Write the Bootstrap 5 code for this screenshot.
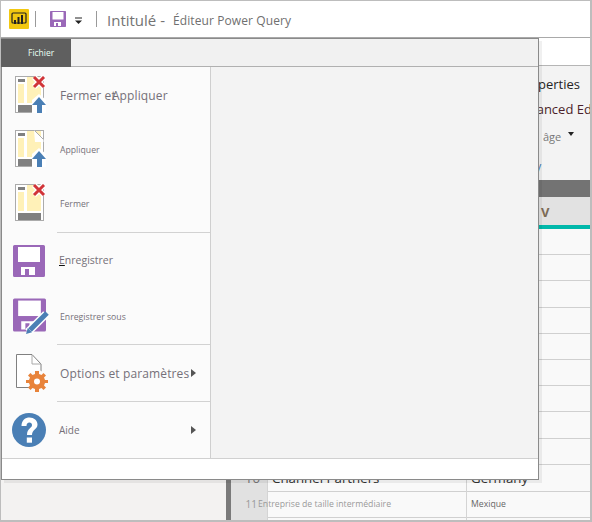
<!DOCTYPE html>
<html lang="fr">
<head>
    <title>Éditeur Power Query</title>
    <meta charset="UTF-8">
    <meta name="viewport" content="width=device-width, initial-scale=1.0">
    <link href="https://cdn.jsdelivr.net/npm/bootstrap@5.3.0/dist/css/bootstrap.min.css" rel="stylesheet">
    <style>
        html, body { height: 522px; overflow: hidden; }
        body { font-family: "Open Sans", "Liberation Sans", sans-serif; background: #fff; color: #6e6a72; position: relative; }

        /* fenetre derriere le menu */
        .app-frame { height: 522px; border: 1px solid #bdbdbd; border-bottom-width: 2px; border-right-width: 2px; }
        .title-bar { height: 37px; padding-left: 8px; border-bottom: 1px solid #a9a9a9; }
        .title-sep { width: 1px; height: 16px; background: #9a9a9a; }
        .sep-first { margin-left: 6px; margin-right: 14px; }
        .save-caret { margin-left: 8px; margin-right: 12px; margin-top: 3px; }
        .title-main { font-size: 15px; color: #737373; margin-left: 10px; width: 66px; white-space: nowrap; padding-top: 3px; }
        .title-sub { font-size: 12px; color: #6f6f6f; white-space: nowrap; letter-spacing: .1px; padding-top: 3px; }
        .tab-strip { height: 28px; border-bottom: 1px solid #b5b5b5; }
        .side-nav { width: 225px; background: #f3f2f1; }
        .ribbon { height: 114px; background: #f3f3f3; white-space: nowrap; padding-top: 6px; overflow: hidden; }
        .ribbon-line { height: 25px; line-height: 25px; font-size: 13px; color: #252423; padding-left: 288px; }
        .ribbon-line.first-line { padding-left: 291px; }
        .ribbon-line.dark { color: #4b1f2a; }
        .ribbon-small { height: 32px; line-height: 30px; padding-left: 317px; font-size: 11px; color: #777; }
        .caret-down { display: inline-block; margin-left: 7px; border: 3.5px solid transparent; border-top: 4px solid #222; border-bottom: 0; vertical-align: 5px; }
        .ribbon-link { height: 25px; line-height: 25px; padding-left: 281px; font-size: 12px; color: #4a7fb5; }
        .table-area { flex: 1; min-width: 0; background: #f9f9f9; }
        .head-dark { height: 17px; background: #737373; }
        .head-cols { height: 28px; background: #e2e2e2; }
        .v-mark { margin-left: 242px; padding-left: 73px; line-height: 30px; font-size: 13px; font-weight: 700; color: #7b6a55; }
        .teal-bar { height: 4px; background: #01b8aa; margin-left: 42px; }
        .data-row { height: 26.2px; display: grid; grid-template-columns: 5px 37px 199px 1fr; }
        .cell-bar { background: #7a7a7a; }
        .cell-num { background: #e1e1e1; border-right: 1px solid #d4d4d4; border-bottom: 1px solid #d0d0d0; text-align: right; padding-right: 7px; white-space: nowrap; }
        .cell-txt { border-right: 1px solid #d4d4d4; border-bottom: 1px solid #d0d0d0; padding-left: 4px; white-space: nowrap; }
        .cell-last { border-bottom: 1px solid #d0d0d0; padding-left: 4px; white-space: nowrap; }
        .row-big > div { font-size: 13.3px; line-height: 26px; color: #333; }
        .row-big .cell-num { color: #777; }
        .row-small > div { font-size: 8.7px; line-height: 26px; color: #999; }
        .row-small .cell-num { font-size: 10px; padding-right: 10px; }
        .row-small .cell-last { color: #666; }
        .over-num { margin-left: -14px; }

        /* menu Fichier */
        .file-menu { position: absolute; left: 1px; top: 38px; width: 538px; height: 442px; background: #fff; border: 1px solid #8a8a8a; box-shadow: 3px 3px 0 rgba(0,0,0,.06); }
        .menu-tabs { height: 28px; background: #f1f1f1; border-bottom: 1px solid #b0b0b0; }
        .tab-file { width: 70px; height: 28px; margin-left: -1px; background: #5f5f5f; color: #eafff4; font-size: 8.5px; line-height: 28px; padding-left: 27px; }
        .menu-body { height: 391px; }
        .menu-left { width: 209px; background: #fbfbfb; border-right: 1px solid #cfcfcf; padding-top: 1px; }
        .menu-right { background: #f3f3f3; }
        .menu-foot { height: 20px; border-top: 1px solid #d0d0d0; }
        .menu-item { position: relative; padding-left: 9px; height: 54px; }
        .menu-item.tall { height: 55.5px; }
        .menu-item.opt { height: 56px; }
        .item-rule { border-bottom: 1px solid #d2d2d2; margin-left: 55px; }
        .rule-first { margin-top: 2px; }
        .item-icon { width: 49px; flex: none; display: flex; }
        .lbl { white-space: nowrap; color: #757079; }
        .lbl-big { font-size: 12px; letter-spacing: .13px; padding-top: 2px; }
        .lbl-mid { font-size: 10.5px; margin-left: -1px; }
        .lbl-aide { font-size: 10px; margin-left: -1px; }
        .lbl-small { font-size: 8.7px; padding-top: 2px; }
        .lbl-low { padding-top: 4px; }
        .lbl-overlap { margin-left: -4px; }
        .key-under { text-decoration: underline; text-decoration-color: #111; }
        .sub-arrow { border: 4px solid transparent; border-left: 5px solid #555; border-right: 0; }
        .arrow-next { margin-left: 2px; }
        .arrow-end { position: absolute; left: 189px; top: 50%; margin-top: -4px; }
    </style>
</head>
<body>
<svg width="0" height="0" class="position-absolute">
    <defs>
        <symbol id="docYellow" viewBox="0 0 34 40">
            <rect x="1.5" y="1.5" width="28" height="36" fill="#fff" stroke="#ababab"/>
            <rect x="4" y="4" width="7" height="3" fill="#808080"/>
            <rect x="4" y="9" width="6" height="19" fill="#fff1b8"/>
            <rect x="4" y="30" width="23" height="7" fill="#808080"/>
            <polygon points="13,2 27,2 27,28 13,28" fill="#fff1b8"/>
        </symbol>
        <symbol id="redCross" viewBox="0 0 14 14">
            <path d="M2 2 L12 12 M12 2 L2 12" stroke="#fff" stroke-width="5.5"/>
            <path d="M2 2 L12 12 M12 2 L2 12" stroke="#d13438" stroke-width="3"/>
        </symbol>
        <symbol id="floppy" viewBox="0 0 32 32">
            <path d="M1.5 0H30.5A1.5 1.5 0 0 1 32 1.5V30.5A1.5 1.5 0 0 1 30.5 32H1.5A1.5 1.5 0 0 1 0 30.5V1.5A1.5 1.5 0 0 1 1.5 0Z" fill="#9a68b8"/>
            <rect x="5" y="2" width="22" height="15" fill="#fff"/>
            <path d="M8 30V22H22V30H16V24H12V30Z" fill="#fff"/>
        </symbol>
    </defs>
</svg>

<div class="app-frame d-flex flex-column">
    <div class="title-bar d-flex align-items-center flex-shrink-0">
        <svg width="20" height="20" viewBox="0 0 20 20">
            <rect width="20" height="20" rx="1" fill="#f2c811"/>
            <rect x="3" y="4" width="14" height="10" rx="1" fill="none" stroke="#222" stroke-width="1.2"/>
            <path d="M5 15V11H7V15ZM8.5 15V8H10.5V15ZM12 15V6H14V15Z" fill="#222"/>
        </svg>
        <span class="title-sep sep-first"></span>
        <svg width="16" height="16"><use href="#floppy"/></svg>
        <svg width="10" height="8" viewBox="0 0 10 8" class="save-caret">
            <path d="M1 1H8" stroke="#222" stroke-width="1"/>
            <path d="M1 3.5H8L4.5 7Z" fill="#222"/>
        </svg>
        <span class="title-sep"></span>
        <span class="title-main">Intitulé -</span>
        <span class="title-sub">Éditeur Power Query</span>
    </div>
    <div class="tab-strip flex-shrink-0"></div>
    <div class="d-flex flex-grow-1 overflow-hidden">
        <div class="side-nav"></div>
        <div class="table-area">
            <div class="ribbon">
                <div class="ribbon-line first-line">Properties</div>
                <div class="ribbon-line dark">Advanced Editor</div>
                <div class="ribbon-small">âge<span class="caret-down"></span></div>
                <div class="ribbon-link">Query</div>
            </div>
            <div class="head-dark"></div>
            <div class="head-cols"><div class="v-mark">V</div></div>
            <div class="teal-bar"></div>
            <div class="data-row"><div class="cell-bar"></div><div class="cell-num"></div><div class="cell-txt"></div><div class="cell-last"></div></div>
            <div class="data-row"><div class="cell-bar"></div><div class="cell-num"></div><div class="cell-txt"></div><div class="cell-last"></div></div>
            <div class="data-row"><div class="cell-bar"></div><div class="cell-num"></div><div class="cell-txt"></div><div class="cell-last"></div></div>
            <div class="data-row"><div class="cell-bar"></div><div class="cell-num"></div><div class="cell-txt"></div><div class="cell-last"></div></div>
            <div class="data-row"><div class="cell-bar"></div><div class="cell-num"></div><div class="cell-txt"></div><div class="cell-last"></div></div>
            <div class="data-row"><div class="cell-bar"></div><div class="cell-num"></div><div class="cell-txt"></div><div class="cell-last"></div></div>
            <div class="data-row"><div class="cell-bar"></div><div class="cell-num"></div><div class="cell-txt"></div><div class="cell-last"></div></div>
            <div class="data-row"><div class="cell-bar"></div><div class="cell-num"></div><div class="cell-txt"></div><div class="cell-last"></div></div>
            <div class="data-row"><div class="cell-bar"></div><div class="cell-num"></div><div class="cell-txt"></div><div class="cell-last"></div></div>
            <div class="data-row row-big"><div class="cell-bar"></div><div class="cell-num">10</div><div class="cell-txt">Channel Partners</div><div class="cell-last">Germany</div></div>
            <div class="data-row row-small"><div class="cell-bar"></div><div class="cell-num">11</div><div class="cell-txt"><span class="over-num">Entreprise de taille intermédiaire</span></div><div class="cell-last">Mexique</div></div>
            <div class="data-row"><div class="cell-bar"></div><div class="cell-num"></div><div class="cell-txt"></div><div class="cell-last"></div></div>
        </div>
    </div>
</div>

<div class="file-menu d-flex flex-column">
    <div class="menu-tabs"><div class="tab-file">Fichier</div></div>
    <div class="menu-body d-flex">
        <div class="menu-left">
            <div class="menu-item d-flex align-items-center">
                <span class="item-icon">
                    <svg width="40" height="42" viewBox="0 0 40 42">
                        <use href="#docYellow" x="3" y="1" width="34" height="40"/>
                        <use href="#redCross" x="21" y="1" width="14" height="14"/>
                        <path d="M21 39V26L28 20L35 26V39Z" fill="#fff"/>
                        <path d="M28 23L35 31H31V39H26V31H21Z" fill="#4a7fb5"/>
                    </svg>
                </span>
                <span class="lbl lbl-big">Fermer et</span><span class="lbl lbl-big lbl-overlap">Appliquer</span>
            </div>
            <div class="menu-item d-flex align-items-center">
                <span class="item-icon">
                    <svg width="40" height="42" viewBox="0 0 40 42">
                        <use href="#docYellow" x="3" y="1" width="34" height="40"/>
                        <path d="M23 2L32.5 11.5V14H24Z" fill="#fff"/>
                        <path d="M23.5 2.5L32.5 11.5" stroke="#ababab" fill="none"/>
                        <path d="M21 39V26L28 20L35 26V39Z" fill="#fff"/>
                        <path d="M28 23L35 31H31V39H26V31H21Z" fill="#4a7fb5"/>
                    </svg>
                </span>
                <span class="lbl lbl-small lbl-low">Appliquer</span>
            </div>
            <div class="menu-item d-flex align-items-center">
                <span class="item-icon">
                    <svg width="40" height="42" viewBox="0 0 40 42">
                        <use href="#docYellow" x="3" y="1" width="34" height="40"/>
                        <use href="#redCross" x="21" y="1" width="14" height="14"/>
                    </svg>
                </span>
                <span class="lbl lbl-small lbl-low">Fermer</span>
            </div>
            <div class="item-rule rule-first"></div>
            <div class="menu-item tall d-flex align-items-center">
                <span class="item-icon">
                    <svg width="40" height="34" viewBox="0 0 40 34"><use href="#floppy" x="2" y="1" width="32" height="32"/></svg>
                </span>
                <span class="lbl lbl-mid"><span class="key-under">E</span>nregistrer</span>
            </div>
            <div class="menu-item tall d-flex align-items-center">
                <span class="item-icon">
                    <svg width="40" height="38" viewBox="0 0 40 38">
                        <use href="#floppy" x="2" y="1" width="33" height="34"/>
                        <path d="M17 35L35 17" stroke="#fff" stroke-width="8"/>
                        <path d="M15 37L16.8 31L21 35.2Z" fill="#4a7fb5"/>
                        <path d="M19 33L36 16" stroke="#4a7fb5" stroke-width="5"/>
                    </svg>
                </span>
                <span class="lbl lbl-small">Enregistrer sous</span>
            </div>
            <div class="item-rule"></div>
            <div class="menu-item opt d-flex align-items-center">
                <span class="item-icon">
                    <svg width="40" height="40" viewBox="0 0 40 40">
                        <path d="M5.5 1.5H21L30 11V34.5H5.5Z" fill="#fff" stroke="#808080"/>
                        <path d="M21 2V11H30" fill="none" stroke="#aaa"/>
                        <circle cx="26" cy="27" r="10" fill="#fbfbfb"/>
                        <path d="M24 18H28V21L30.5 22L32.5 20L35 22.5L33 24.5L34 27H37V30H34L33 32.5L35 34.5L32.5 37L30.5 35L28 36V39H24V36L21.5 35L19.5 37L17 34.5L19 32.5L18 30H15V27H18L19 24.5L17 22.5L19.5 20L21.5 22L24 21Z" fill="#e8833a"/>
                        <circle cx="26" cy="28.500" r="3" fill="#fff"/>
                    </svg>
                </span>
                <span class="lbl lbl-big">Options et paramètres</span>
                <span class="sub-arrow arrow-next"></span>
            </div>
            <div class="item-rule"></div>
            <div class="menu-item opt d-flex align-items-center">
                <span class="item-icon">
                    <svg width="40" height="36" viewBox="0 0 40 36">
                        <circle cx="18" cy="18" r="17" fill="#4a7fb5"/>
                        <path d="M10.500 14C10.500 8 14.500 5.500 18.500 5.500C23 5.500 26.500 8.500 26.500 12.500C26.500 17.500 21 17.500 21 23H16C16 16 21 16.500 21 13C21 11.500 20 10.500 18.400 10.500C16.600 10.500 15.500 12 15.500 14Z" fill="#fff"/>
                        <rect x="15.800" y="25.500" width="5.200" height="5.200" fill="#fff"/>
                    </svg>
                </span>
                <span class="lbl lbl-aide">Aide</span>
                <span class="sub-arrow arrow-end"></span>
            </div>
        </div>
        <div class="menu-right flex-grow-1"></div>
    </div>
    <div class="menu-foot"></div>
</div>
<script src="https://cdn.jsdelivr.net/npm/bootstrap@5.3.0/dist/js/bootstrap.bundle.min.js"></script>
</body>
</html>
